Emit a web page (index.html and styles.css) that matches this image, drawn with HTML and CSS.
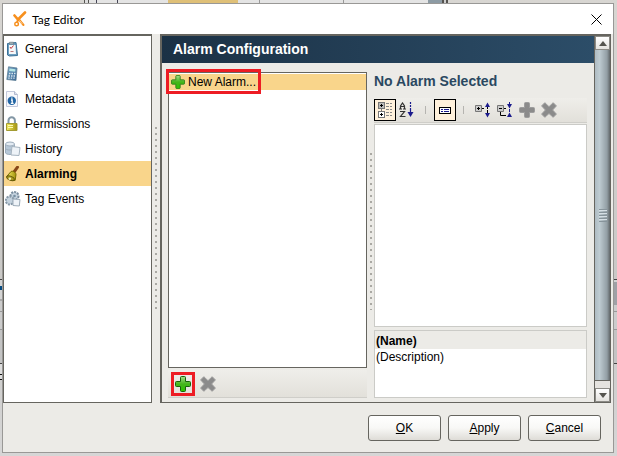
FILE: index.html
```html
<!DOCTYPE html>
<html lang="en">
<head>
    <meta charset="utf-8">
    <title>Tag Editor</title>
    <link rel="stylesheet" href="styles.css">
</head>
<body>
<!-- Shared icon shapes -->
<svg class="symbols" width="0" height="0" aria-hidden="true">
    <defs>
        <linearGradient id="green" x1="0" y1="0" x2="0" y2="1">
            <stop offset="0" stop-color="#a5dc8c"/>
            <stop offset="0.5" stop-color="#45b51b"/>
            <stop offset="1" stop-color="#2fc400"/>
        </linearGradient>
        <linearGradient id="gold" x1="0" y1="0" x2="1" y2="0">
            <stop offset="0" stop-color="#f4ec62"/>
            <stop offset="1" stop-color="#a3930e"/>
        </linearGradient>
        <linearGradient id="blue" x1="0" y1="0" x2="1" y2="1">
            <stop offset="0" stop-color="#7ba9c9"/>
            <stop offset="1" stop-color="#2f6190"/>
        </linearGradient>
        <symbol id="plus" viewBox="0 0 16 16">
            <path d="M5.5 1.5q0-1 1-1h3q1 0 1 1v4h4q1 0 1 1v3q0 1-1 1h-4v4q0 1-1 1h-3q-1 0-1-1v-4h-4q-1 0-1-1v-3q0-1 1-1h4z"/>
        </symbol>
        <symbol id="cross" viewBox="0 0 16 16">
            <path d="M3.8.7 8 4.7 12.2.7 15.4 3.9 11.6 8l3.8 4.1-3.2 3.2L8 11.5l-4.2 3.8L.6 12.1 4.4 8 .6 3.9z"/>
        </symbol>
    </defs>
</svg>

<div class="dialog">
    <header class="title-bar">
        <svg class="logo" width="14" height="16" viewBox="0 0 14 16">
            <path d="M1.5 4.5 5 8.5 12 1.5" fill="none" stroke="#f7901e" stroke-width="2.6" stroke-linecap="round"/>
            <path d="M5 8.5 3.8 12.5M6 8.5 10.5 14" fill="none" stroke="#f7901e" stroke-width="2" stroke-linecap="round"/>
            <circle cx="3.6" cy="13" r="1.8" fill="#fff" stroke="#f7901e" stroke-width="1.4"/>
            <path d="M6.5 9.5l2.8 3.4" stroke="#fde0b8" stroke-width=".8"/>
        </svg>
        <h1>Tag Editor</h1>
        <button type="button" class="close-button" aria-label="Close">
            <svg width="11" height="11" viewBox="0 0 11 11"><path d="M.5.5l10 10M10.5.5l-10 10" stroke="#000" fill="none"/></svg>
        </button>
    </header>

    <div class="content">
        <nav class="sidebar">
            <a href="#general">
                <svg width="16" height="16" viewBox="0 0 16 16">
                    <path d="M2.5 2.5 11 1.5l1.5 13-8 .5-2-1z" fill="#6c9fc0" stroke="#3c7198"/>
                    <path d="M4 4h6.5l.5 9H4z" fill="#f6f8fa"/>
                    <path d="M4.5 1.2h4v2h-4z" fill="#a9b5bc" stroke="#6a7780" stroke-width=".6"/>
                    <path d="M5 6l1 1.5L8.5 4.5" stroke="#c3373a" fill="none"/>
                    <path d="M5.5 10.5h3" stroke="#b9797b"/>
                </svg>
                General
            </a>
            <a href="#numeric">
                <svg width="16" height="16" viewBox="0 0 16 16">
                    <path d="M3.5.8 12 2l-1 12.5-9.2-1z" fill="url(#blue)" stroke="#5f7f96" stroke-width=".8"/>
                    <path d="M4.5 2.5 10.5 3.2 10.2 5.8 4.2 5z" fill="#b5e6e5"/>
                    <path d="M4 7.5h6.5M3.5 10h6.5M3.2 12.2h6.5" stroke="#d9e5ee" stroke-width="1.3" stroke-dasharray="1.5 1"/>
                </svg>
                Numeric
            </a>
            <a href="#metadata">
                <svg width="16" height="16" viewBox="0 0 16 16">
                    <path d="M1.5.5h8l3 3v12h-11z" fill="#f7f8fc" stroke="#c3c9dc"/>
                    <path d="M9.5.5v3h3" fill="#dde2ef" stroke="#b3bace"/>
                    <circle cx="6.8" cy="9.8" r="4.2" fill="#2165a4"/>
                    <path d="M6 9h1.2v3.5M5.8 12.4h2.8M6.2 7.2h1.3" stroke="#fff" stroke-width="1.3" fill="none"/>
                </svg>
                Metadata
            </a>
            <a href="#permissions">
                <svg width="16" height="16" viewBox="0 0 16 16">
                    <path d="M3.5 8V4.5a3.2 3.2 0 0 1 6.4 0V8" fill="none" stroke="#8397a5" stroke-width="2"/>
                    <path d="M1.5 7.5h10.5v7H1.5z" fill="url(#gold)" stroke="#a39b32"/>
                    <path d="M3 9.5h5M3 11.5h5" stroke="#fffcb0"/>
                </svg>
                Permissions
            </a>
            <a href="#history">
                <svg width="16" height="16" viewBox="0 0 16 16">
                    <path d="M.5 3v9c1 2 8 2 9 0V3" fill="#b7c8d8" stroke="#9dadbc"/>
                    <ellipse cx="5" cy="3" rx="4.5" ry="2" fill="#e3ebf3" stroke="#9dadbc"/>
                    <path d="M.5 7.5c1 2 8 2 9 0" fill="none" stroke="#9dadbc"/>
                    <path d="M7 5.5l8 1-1 8-8-.5z" fill="#eef3f8" stroke="#a6b4c0"/>
                </svg>
                History
            </a>
            <a href="#alarming" class="active">
                <svg width="16" height="16" viewBox="0 0 16 16">
                    <path d="M9 6 12.5 1.2" stroke="#874718" stroke-width="3" stroke-linecap="round"/>
                    <path d="M6 5.5c2-1 5 1 5 3l-.8 5.8c-3 1-7.5-1-8.5-3.8z" fill="url(#gold)" stroke="#756900"/>
                    <ellipse cx="5.5" cy="12.2" rx="4" ry="2" transform="rotate(22 5.5 12.2)" fill="#ab9a20" stroke="#655a0a"/>
                    <circle cx="4.8" cy="12.8" r="1.3" fill="#f6f2b9"/>
                </svg>
                Alarming
            </a>
            <a href="#events">
                <svg width="16" height="16" viewBox="0 0 16 16">
                    <circle cx="9.5" cy="5" r="4" fill="#c5d3df" stroke="#7b8e9f" stroke-width="2" stroke-dasharray="2 1"/>
                    <circle cx="4.8" cy="9.5" r="4" fill="#c5d3df" stroke="#8799a8" stroke-width="2" stroke-dasharray="2 1"/>
                    <circle cx="9.5" cy="5" r="1.3" fill="#7890a3"/>
                    <path d="M8 8l7 .5-.7 6.5-6.3-.5z" fill="#eef3f8" stroke="#9dacb9"/>
                </svg>
                Tag Events
            </a>
        </nav>

        <div class="splitter outer"></div>

        <main class="editor">
            <section class="config">
                <h2>Alarm Configuration</h2>
                <div class="panes">
                    <div class="alarms">
                        <div class="alarm-list">
                            <button type="button" class="alarm">
                                <svg width="14" height="14" fill="url(#green)" stroke="#2f7d1c"><use href="#plus"/></svg>
                                New Alarm...
                            </button>
                            <span class="highlight"></span>
                        </div>
                        <div class="toolbar list-tools">
                            <button type="button" class="add-button" aria-label="Add alarm">
                                <svg width="16" height="16" fill="url(#green)" stroke="#17620a"><use href="#plus"/></svg>
                            </button>
                            <button type="button" aria-label="Delete alarm">
                                <svg width="16" height="16" fill="#8b8b8b" stroke="#9d9d9d"><use href="#cross"/></svg>
                            </button>
                        </div>
                    </div>

                    <div class="splitter inner"></div>

                    <div class="properties">
                        <h3>No Alarm Selected</h3>
                        <div class="toolbar property-tools">
                            <button type="button" class="pressed" aria-label="Categorized">
                                <svg width="16" height="16" viewBox="0 0 16 16" shape-rendering="crispEdges">
                                    <path d="M1.5.5h6v6h-6z" fill="#bbb" stroke="#777"/>
                                    <path d="M1.5 9.5h6v6h-6z" fill="#fff" stroke="#777"/>
                                    <path d="M4.5 7v2" stroke="#777"/>
                                    <path d="M3 3.5h3M4.5 2v3M3 12.5h3M4.5 11v3" stroke="#000"/>
                                    <path d="M9 1.5h3M13 1.5h2M9 4.5h3M13 4.5h2M9 7.5h3M13 7.5h2M9 10.5h3M13 10.5h2M9 13.5h3M13 13.5h2" stroke="#888"/>
                                </svg>
                            </button>
                            <button type="button" aria-label="Sort alphabetically">
                                <svg width="16" height="16" viewBox="0 0 16 16">
                                    <path d="M1.5 7V4l2-3 2 3v3M2 4.5h3M0 7h3M4 7h3M1 9.5h4.5l-4 5h5" fill="none" stroke="#333" stroke-width="1.2"/>
                                    <path d="M11.5 0v2M11.5 3v2M11.5 6v5" stroke="#1b1b8c" stroke-width="1.2"/>
                                    <path d="M8.5 10h6l-3 5z" fill="#1b1b8c"/>
                                </svg>
                            </button>
                            <span class="separator"></span>
                            <button type="button" class="pressed" aria-label="Show description">
                                <svg width="16" height="16" viewBox="0 0 16 16" shape-rendering="crispEdges">
                                    <path d="M2.5 5.5h11v6h-11z" fill="#fff" stroke="#000"/>
                                    <path d="M4 7.5h2M7 7.5h5M4 9.5h2M7 9.5h5" stroke="#1b1b8c"/>
                                </svg>
                            </button>
                            <span class="separator"></span>
                            <button type="button" aria-label="Expand all">
                                <svg width="16" height="16" viewBox="0 0 16 16">
                                    <path d="M.5 3.5h6v6h-6z" fill="#ccc" stroke="#777"/>
                                    <path d="M2 6.5h3M3.5 5v3M7 6.5h2M12.5 5v2M12.5 8v3" stroke="#000"/>
                                    <path d="M10 5l2.5-4.5L15 5zM10 11l2.5 4.5L15 11z" fill="#1b1b8c"/>
                                </svg>
                            </button>
                            <button type="button" aria-label="Collapse all">
                                <svg width="16" height="16" viewBox="0 0 16 16">
                                    <path d="M.5 3.5h6v6h-6z" fill="#ccc" stroke="#777"/>
                                    <path d="M2 6.5h3M7 6.5h2M3.5 10v3.5H9" fill="none" stroke="#000"/>
                                    <path d="M10 2l2.5 4.5L15 2zM10 15l2.5-4.5L15 15z" fill="#1b1b8c"/>
                                    <path d="M12.5 0v2M12.5 7v3" stroke="#1b1b8c"/>
                                </svg>
                            </button>
                            <button type="button" aria-label="Add property">
                                <svg width="16" height="16" fill="#8b8b8b" stroke="#9d9d9d"><use href="#plus"/></svg>
                            </button>
                            <button type="button" aria-label="Remove property">
                                <svg width="16" height="16" fill="#8b8b8b" stroke="#9d9d9d"><use href="#cross"/></svg>
                            </button>
                        </div>
                        <div class="property-table"></div>
                        <dl class="description">
                            <dt>(Name)</dt>
                            <dd>(Description)</dd>
                        </dl>
                    </div>
                </div>
            </section>

            <div class="scrollbar">
                <button type="button" aria-label="Scroll up"><svg width="8" height="5" viewBox="0 0 8 5"><path d="M0 5l4-5 4 5z" fill="#55544e"/></svg></button>
                <div class="thumb"><span class="grip"></span></div>
                <button type="button" aria-label="Scroll down"><svg width="8" height="5" viewBox="0 0 8 5"><path d="M0 0l4 5 4-5z" fill="#55544e"/></svg></button>
            </div>
        </main>
    </div>

    <footer class="actions">
        <button type="button"><u>O</u>K</button>
        <button type="button"><u>A</u>pply</button>
        <button type="button"><u>C</u>ancel</button>
    </footer>
</div>
</body>
</html>
```
FILE: styles.css
```css
* {
    box-sizing: border-box;
}

/* The window behind shows as thin strips round the dialog */
body {
    margin: 0;
    padding: 3px;
    padding-left: 2px;
    min-height: 100vh;
    display: flex;
    background:
        linear-gradient(to right, #55534f 0 1px, #ddd 1px 4px, #55534f 4px 5px, #e4e4e4 5px 12px, #445 12px 13px, #e4e4e4 13px 33px, #445 33px 34px, #e4e4e4 34px 84px, #dfc078 84px 154px, #e4e4e4 154px 175px, #999 175px 176px, #e4e4e4 176px 259px, #999 259px 260px, #e4e4e4 260px 344px, #8d9ba4 344px 358px, #55534f 358px 360px, #ccc 360px 362px, #55534f 362px 364px) 84px 0 / 364px 3px no-repeat,
        linear-gradient(to bottom, #444 0 1px, #d4d4d4 1px 7px, #064a80 7px 11px, #d4d4d4 11px 20px, #aaa 20px 22px, #ccc 22px 32px, #999 32px 33px, #ccc 33px 50px, #999 50px 51px, #c4c4c4 51px 84px, #444 84px 85px, #ddd 85px 95px, #111 95px 96px, #ddd 96px 100px, #111 100px 101px) 0 279px / 2px 101px no-repeat,
        linear-gradient(to bottom, #444 0 1px, #d4d4d4 1px 3px, #9fa1a6 3px 26px, #ccc 26px 32px, #999 32px 33px, #ccc 33px 50px, #999 50px 51px, #c4c4c4 51px 84px, #444 84px 85px) right 279px / 3px 85px no-repeat,
        linear-gradient(to bottom, #d8d6d2, #c9c8c6 65%, #d6d6d6);
    font-family: "Liberation Sans", Arial, sans-serif;
    font-size: 12px;
    color: #000;
}

h1, h2, h3, dl, dd {
    margin: 0;
}

svg {
    display: block;
    flex: none;
}

button {
    padding: 0;
    border: none;
    background: none;
    font: inherit;
    color: inherit;
}

.symbols {
    position: absolute;
}

.dialog {
    flex: 1;
    display: flex;
    flex-direction: column;
    border: 1px solid #999896;
    background-color: #ecebe7;
}

/* Window title */
.title-bar {
    display: flex;
    align-items: center;
    height: 30px;
    padding: 0 11px 0 10px;
    background-color: #fff;
}

.title-bar h1 {
    flex: 1;
    margin-left: 5px;
    font-family: Lato, "Open Sans", sans-serif;
    font-size: 12px;
    font-weight: normal;
}

.content {
    flex: 1;
    display: flex;
    padding-right: 2px;
}

/* Categories on the left */
.sidebar {
    width: 149px;
    border: 2px solid #66655f;
    border-width: 2px 1px 1px 1px;
    background-color: #fff;
}

.sidebar a {
    display: flex;
    align-items: center;
    gap: 4px;
    height: 25px;
    padding-left: 1px;
    color: #000;
    text-decoration: none;
}

.sidebar a.active {
    background-color: #f9d58b;
    font-weight: bold;
}

.splitter {
    width: 4px;
    margin: 92px 2px;
    background-image: radial-gradient(circle at 2px 2px, #aaa9a4 1px, transparent 1px);
    background-size: 4px 6px;
}

.splitter.inner {
    width: 3px;
    margin: 80px 2px 88px 2px;
}

.editor {
    flex: 1;
    display: flex;
    border: 2px solid #66655f;
    border-width: 2px 1px 1px 2px;
}

.config {
    flex: 1;
    display: flex;
    flex-direction: column;
}

.config h2 {
    padding-left: 11px;
    font-size: 14px;
    line-height: 27px;
    color: #fff;
    background: linear-gradient(to right, #1b3145, #2c4d68);
}

.panes {
    flex: 1;
    display: flex;
    padding: 9px 7px 4px 6px;
}

/* List of alarms */
.alarms {
    flex: 0 0 199px;
    display: flex;
    flex-direction: column;
}

.alarm-list {
    position: relative;
    flex: 1;
    padding-top: 1px;
    border: 1px solid #66655f;
    background-color: #fff;
}

.alarm {
    display: flex;
    align-items: center;
    gap: 3px;
    width: 100%;
    height: 16px;
    padding-left: 2px;
    background-color: #f9d58b;
}

.highlight {
    position: absolute;
    top: -4px;
    left: -3px;
    width: 95px;
    height: 25px;
    border: 3px solid #ed1c24;
}

.toolbar {
    display: flex;
    align-items: center;
    border-bottom: 1px solid #cfcec9;
    background: linear-gradient(to bottom, #efeeea, #e2e0da);
}

.list-tools {
    gap: 5px;
    height: 28px;
    margin-top: 2px;
    padding-left: 3px;
}

.add-button {
    padding: 1px;
    border: 3px solid #ed1c24;
}

/* Properties of the selected alarm */
.properties {
    flex: 1;
    display: flex;
    flex-direction: column;
}

.properties h3 {
    font-size: 14px;
    line-height: 18px;
    color: #2a4861;
}

.property-tools {
    height: 25px;
    margin-top: 8px;
}

.property-tools button {
    display: grid;
    place-items: center;
    width: 22px;
    height: 22px;
}

.property-tools .pressed {
    border: 1px solid #000;
    background-color: #fff1dc;
}

.property-tools .separator {
    width: 1px;
    height: 8px;
    margin: 0 8px 0 7px;
    background-color: #b5b4b0;
}

.property-table {
    flex: 1;
    margin-top: 1px;
    border: 1px solid #cbcbc7;
    background-color: #fff;
}

.description {
    height: 68px;
    margin-top: 3px;
    border: 1px solid #cbcbc7;
    background-color: #fff;
    line-height: 16px;
}

.description dt {
    padding: 2px 1px 0;
    background-color: #ecebe7;
    font-weight: bold;
}

.description dd {
    padding-left: 1px;
}

.scrollbar {
    width: 16px;
    display: flex;
    flex-direction: column;
    border-left: 1px solid #66655f;
    background-color: #e5e3df;
}

.scrollbar button {
    display: grid;
    place-items: center;
    height: 14px;
    border: 1px solid #8c8b86;
    background: linear-gradient(to bottom, #fff, #e4e2de);
}

.thumb {
    flex: 1;
    display: grid;
    place-items: center;
    margin-bottom: 7px;
    border-bottom: 1px solid #66655f;
    background: linear-gradient(to right, #aebbc2, #becbd1 30%, #929ea4 80%, #62686a);
}

.grip {
    width: 8px;
    height: 13px;
    background: repeating-linear-gradient(to bottom, #87949b 0 1px, #d5dfe4 1px 2px, transparent 2px 3px);
}

/* Dialog buttons */
.actions {
    display: flex;
    justify-content: flex-end;
    gap: 7px;
    padding: 12px 12px 11px;
}

.actions button {
    width: 73px;
    height: 26px;
    border: 1px solid #66655f;
    border-radius: 3px;
    background: linear-gradient(to bottom, #fff, #f8f8f6 50%, #dedcd7);
}
```
